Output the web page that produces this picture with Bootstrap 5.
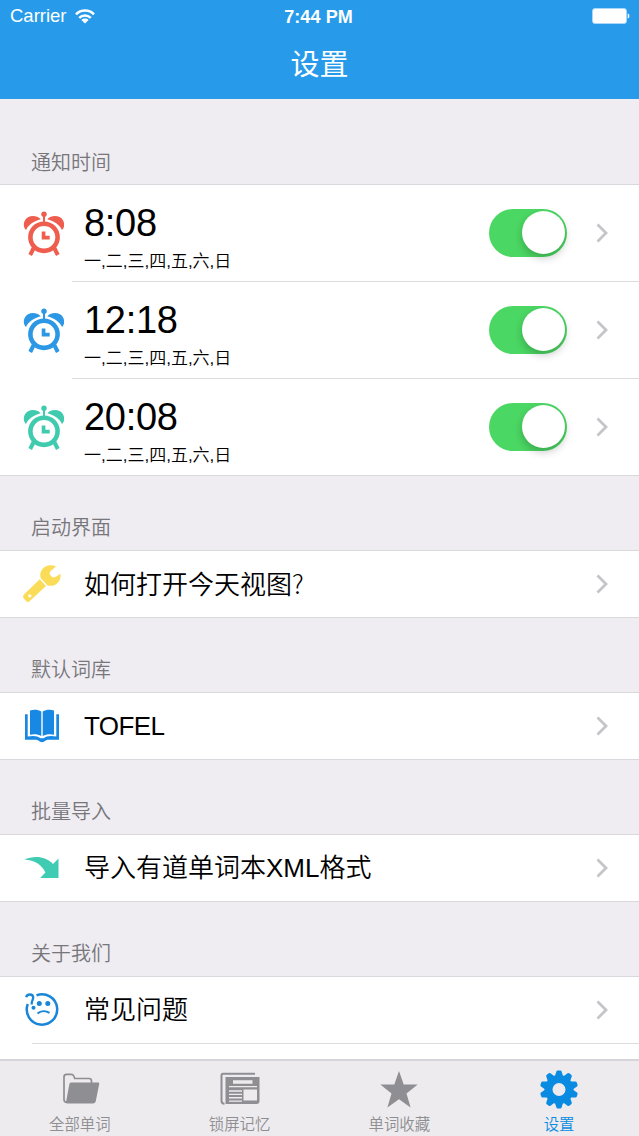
<!DOCTYPE html>
<html lang="zh-CN">
<head>
<meta charset="utf-8">
<meta name="viewport" content="width=device-width, initial-scale=1">
<title>设置</title>
<link href="https://cdn.jsdelivr.net/npm/bootstrap@5.3.0/dist/css/bootstrap.min.css" rel="stylesheet">
<style>
  body { font-family: "Liberation Sans", "Noto Sans CJK SC", sans-serif; font-weight: 350; color: #000; background: #efedf2; }
  .screen { height: 1136px; }
  .topbar { height: 99px; background: #279bea; color: #fff; }
  .statusbar { height: 32px; padding: 0 9px 0 10px; font-size: 18.5px; line-height: 34px; }
  .statusbar > div { flex: 1 1 0; }
  .statusbar .clock { font-size: 18px; font-weight: 700; text-align: center; letter-spacing: .1px; padding-right: 3px; }
  .screen-title { font-size: 29px; line-height: 67px; font-weight: 400; }
  .group-title { height: 74px; padding: 0 31px 7px; font-size: 20px; line-height: 30px; color: #77767b; }
  .group-title.first { height: 85px; padding-bottom: 6px; }
  .rows { background: #fff; border-top: 1px solid #d9d8dc; border-bottom: 1px solid #d9d8dc; }
  .setting { height: 66px; padding: 0 31px 0 20px; font-size: 26px; line-height: 38px; }
  .setting .glyph { width: 44px; height: 46px; margin-right: 20px; }
  .latin-tight { letter-spacing: -.6px; }
  .thin-mark { font-family: "Noto Sans CJK SC", sans-serif; font-weight: 300; }
  .alarm { height: 96px; }
  .alarm .hour { font-size: 38px; line-height: 44px; font-weight: 400; letter-spacing: -.3px; padding-top: 9px; }
  .alarm .days { font-size: 17px; line-height: 26px; padding-top: 4px; }
  .inset-line { height: 1px; background: #dcdcde; margin-left: 72px; }
  .inset-line.wide { margin-left: 32px; }
  .toggle-on { width: 78px; height: 48px; border-radius: 24px; background: #4bd763; padding: 2px; margin-right: 29px; }
  .toggle-on span { width: 43px; height: 43px; border-radius: 50%; background: #fff; box-shadow: 0 4px 8px rgba(0,0,0,.22); }
  .tabs-bottom { height: 77px; background: #edebee; border-top: 2px solid #d7d5d9; font-size: 15.4px; line-height: 20px; color: #8f8e92; padding-top: 8px; }
  .tabs-bottom svg { width: 42px; height: 42px; display: block; margin: 0 auto 4px; }
  .tabs-bottom .current { color: #0a8be2; }
</style>
</head>
<body>
<svg class="d-none">
  <symbol id="clock" viewBox="0 0 44 46">
    <g fill="currentColor">
      <path id="bell" d="M6 20C2.500 17 3.200 10 8 7.300c4.200-2.400 9.500-1.300 12.700 1.900C14 11 8.500 14.500 6 20z"/>
      <path d="M42 20C45.500 17 44.800 10 40 7.300c-4.200-2.400-9.500-1.300-12.700 1.900C34 11 39.500 14.500 42 20z"/>
      <circle cx="24" cy="4.300" r="2.700"/><path d="M23 5h2v9h-2zM21.700 21.500h3.700v4.300h4.300v3.800h-8z"/>
    </g>
    <g fill="none" stroke="currentColor"><circle cx="24" cy="27.300" r="13.600" stroke-width="4.600"/><path d="M13.700 38L10.200 45M34.300 38l3.500 7" stroke-width="4"/></g>
  </symbol>
  <symbol id="chevron" viewBox="0 0 12 20"><path d="M1.500 1.500L10 10l-8.500 8.500" fill="none" stroke="#c4c4c9" stroke-width="2.800"/></symbol>
  <symbol id="tooth" viewBox="0 0 42 42"><path d="M16.800 7.500L18.400 2.400Q18.800 1.400 19.800 1.400H22.200Q23.200 1.400 23.600 2.400L25.200 7.500z"/></symbol>
</svg>

<main class="screen d-flex flex-column overflow-hidden">
  <header class="topbar">
    <div class="statusbar d-flex">
      <div class="d-flex align-items-center"><span>Carrier</span>
        <svg class="ms-2" width="20" height="15" viewBox="0 0 20 15"><g fill="none" stroke="#fff" stroke-width="2.500"><path d="M1 5.300C6 .3 14 .3 19 5.300M4.200 8.800c3.200-3.100 8.400-3.100 11.600 0"/></g><path d="M10 14.500L6.400 11c1.900-1.900 5.300-1.900 7.200 0z" fill="#fff"/></svg>
      </div>
      <div class="clock">7:44 PM</div>
      <div class="d-flex justify-content-end align-items-center"><svg width="38" height="16" viewBox="0 0 38 16"><rect x=".5" y=".5" width="34" height="15" rx="2.500" fill="#fff" stroke="#a8d7f7"/><path d="M35.700 5.500c2.300.6 2.300 4.400 0 5z" fill="#fff"/></svg></div>
    </div>
    <h1 class="screen-title text-center m-0">设置</h1>
  </header>

  <div class="flex-grow-1 overflow-hidden">
    <div class="group-title first d-flex align-items-end">通知时间</div>
    <div class="rows">
      <div class="setting alarm d-flex align-items-center">
        <svg class="glyph" style="color:#ee5d4d"><use href="#clock"/></svg>
        <div class="flex-grow-1"><div class="hour">8:08</div><div class="days">一,二,三,四,五,六,日</div></div>
        <div class="toggle-on d-flex justify-content-end"><span></span></div>
        <svg width="12" height="20"><use href="#chevron"/></svg>
      </div>
      <div class="inset-line"></div>
      <div class="setting alarm d-flex align-items-center">
        <svg class="glyph" style="color:#2c98e5"><use href="#clock"/></svg>
        <div class="flex-grow-1"><div class="hour">12:18</div><div class="days">一,二,三,四,五,六,日</div></div>
        <div class="toggle-on d-flex justify-content-end"><span></span></div>
        <svg width="12" height="20"><use href="#chevron"/></svg>
      </div>
      <div class="inset-line"></div>
      <div class="setting alarm d-flex align-items-center">
        <svg class="glyph" style="color:#40cbae"><use href="#clock"/></svg>
        <div class="flex-grow-1"><div class="hour">20:08</div><div class="days">一,二,三,四,五,六,日</div></div>
        <div class="toggle-on d-flex justify-content-end"><span></span></div>
        <svg width="12" height="20"><use href="#chevron"/></svg>
      </div>
    </div>

    <div class="group-title d-flex align-items-end">启动界面</div>
    <div class="rows">
      <div class="setting d-flex align-items-center">
        <svg class="glyph" viewBox="0 0 44 46" fill="#fbdc58"><path d="M36 5.500C31.500 3.200 25.500 4 22.300 8.300c-2.300 3-2.400 6.300-1.500 9l6.500 7c3.500 1.200 7.500.4 10.200-2.300 2.600-2.600 3.600-6 2.900-9.300l-4.600 3.100c-1.500 1-3.300.8-4.400-.4l-.9-1.100c-1.100-1.300-1-3 .2-4.200z"/><path d="M19.800 18.300L4 33.500c-1.200 1.200-1.200 2.700-.2 3.900l2.300 2.700c1.100 1.200 2.500 1.200 3.700 0L26 25z"/><circle cx="9.800" cy="34.800" r="1.600" fill="#fff"/></svg>
        <div class="flex-grow-1">如何打开今天视图<span class="thin-mark">?</span></div>
        <svg width="12" height="20"><use href="#chevron"/></svg>
      </div>
    </div>

    <div class="group-title d-flex align-items-end">默认词库</div>
    <div class="rows">
      <div class="setting d-flex align-items-center">
        <svg class="glyph" viewBox="0 0 44 46" fill="#1788e3"><path d="M10 7.600c4-1.300 8.200-.8 11.300.9V33c-3.200-1.800-7.300-2.300-11.300-1.300zM34 7.600c-4-1.300-8.200-.8-11.300.9V33c3.200-1.800 7.300-2.300 11.300-1.300z"/><path d="M5 11.300h2.700v22.300c5.500-1 10-.6 12.600 1.700h3.400c2.600-2.300 7.100-2.700 12.600-1.700V11.300H39v25.500H27.200c-1.500 0-2.500 2.400-5.200 2.400s-3.700-2.400-5.200-2.400H5z"/></svg>
        <div class="flex-grow-1 latin-tight">TOFEL</div>
        <svg width="12" height="20"><use href="#chevron"/></svg>
      </div>
    </div>

    <div class="group-title d-flex align-items-end">批量导入</div>
    <div class="rows">
      <div class="setting d-flex align-items-center">
        <svg class="glyph" viewBox="0 0 44 46"><path d="M4.200 14.400C14 10.300 26 11 33 19l5.500-5.500V33H20.200l5.200-5.500C22.500 20.500 15 14.800 4.200 14.400z" fill="#40ccb2"/></svg>
        <div class="flex-grow-1">导入有道单词本XML格式</div>
        <svg width="12" height="20"><use href="#chevron"/></svg>
      </div>
    </div>

    <div class="group-title d-flex align-items-end">关于我们</div>
    <div class="rows">
      <div class="setting d-flex align-items-center">
        <svg class="glyph" viewBox="0 0 44 46"><g fill="none" stroke="#1986d8" stroke-width="2.500"><path d="M16.500 8.300A15.200 15.200 0 1 1 7.800 17"/><path d="M6.200 10.200c.7-3.600 6.800-3.700 7 .1.100 2.800-1.900 3.300-1.500 7.200" stroke-width="2.300"/><path d="M17.500 26.500c3.500-3 8.300-3.100 12-.6" stroke-width="2"/></g><g fill="#1986d8"><circle cx="19.300" cy="16.500" r="2.500"/><circle cx="27.800" cy="16.500" r="2.500"/><circle cx="13.500" cy="20.800" r="2"/></g></svg>
        <div class="flex-grow-1">常见问题</div>
        <svg width="12" height="20"><use href="#chevron"/></svg>
      </div>
      <div class="inset-line wide"></div>
      <div class="setting"></div>
    </div>
  </div>

  <nav class="tabs-bottom row g-0 text-center flex-shrink-0">
    <div class="col-3">
      <svg viewBox="0 0 42 42"><path d="M8 33.500q-3 0-3-3V8q0-2.700 2.700-2.700H12q2 0 2.800 1.700l1 2.500H30q2.500 0 2.500 2.500v2" fill="none" stroke="#8f8e92" stroke-width="1.700"/><path d="M12.500 13.600h26.600c1 0 1.300.6 1.100 1.500l-3.400 17c-.3 1.500-1.300 2.300-2.800 2.300H8.500c-1 0-1.600-.6-1.400-1.600l3.200-17.400c.2-1.200.9-1.800 2.200-1.800z" fill="#8f8e92"/></svg>
      全部单词
    </div>
    <div class="col-3">
      <svg viewBox="0 0 42 42"><path d="M36 4.700H4q-1.500 0-1.500 1.500v25.500q0 3 3 3" fill="none" stroke="#8f8e92" stroke-width="2"/><path d="M6.500 8H40.500v24q0 3-3 3H6.500zM14 11.200v3.600h19.500v-3.600zM10 17v1.200h28V17zM24.500 20.500v11H38v-11zM10 21.300v1.400h13v-1.400zM10 24.700v1.400h13v-1.400zM10 28.100v1.400h13v-1.400zM10 31.500v1.200h13v-1.200z" fill="#8f8e92" fill-rule="evenodd"/></svg>
      锁屏记忆
    </div>
    <div class="col-3">
      <svg viewBox="0 0 42 42"><path d="M21 2l4.700 13.600h14L28.500 24.400 32.600 38.500 21 30.200 9.400 38.500l4.100-14.100L2.300 15.600h14z" fill="#8f8e92"/></svg>
      单词收藏
    </div>
    <div class="col-3 current">
      <svg viewBox="0 0 42 42" fill="#0a8be2"><circle cx="21" cy="20.500" r="10.500" stroke="#0a8be2" stroke-width="8" fill="none"/>
        <g id="half"><use href="#tooth" width="42" height="42"/><use href="#tooth" width="42" height="42" transform="rotate(36 21 20.500)"/><use href="#tooth" width="42" height="42" transform="rotate(72 21 20.500)"/><use href="#tooth" width="42" height="42" transform="rotate(108 21 20.500)"/><use href="#tooth" width="42" height="42" transform="rotate(144 21 20.500)"/></g>
        <use href="#half" transform="rotate(180 21 20.500)"/></svg>
      设置
    </div>
  </nav>
</main>
<script src="https://cdn.jsdelivr.net/npm/bootstrap@5.3.0/dist/js/bootstrap.bundle.min.js"></script>
</body>
</html>
